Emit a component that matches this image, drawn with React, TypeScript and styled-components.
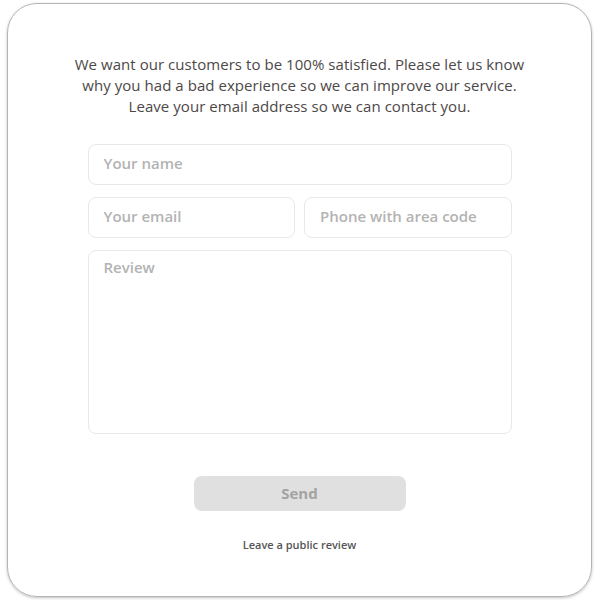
import styled, { createGlobalStyle } from 'styled-components'

const GlobalStyle = createGlobalStyle`
	html, body {
		margin: 0;
		padding: 0;
		background: #ffffff;
	}

	body {
		font-family: 'Open Sans', 'Liberation Sans', sans-serif;
	}
`

export default function App() {
	return (
		<>
			<GlobalStyle />
			<Page>
				<Card>
					<Intro>
						We want our customers to be 100% satisfied. Please let us know
						<br />
						why you had a bad experience so we can improve our service.
						<br />
						Leave your email address so we can contact you.
					</Intro>

					<Form onSubmit={(e) => e.preventDefault()}>
						<Input type='text' placeholder='Your name' />

						<Row>
							<Input type='email' placeholder='Your email' />
							<Input type='tel' placeholder='Phone with area code' />
						</Row>

						<TextArea placeholder='Review' />

						<SendButton type='submit' disabled>Send</SendButton>
					</Form>

					<PublicLink href='#'>Leave a public review</PublicLink>
				</Card>
			</Page>
		</>
	)
}

const Page = styled.div`
	width: 600px;
	height: 600px;
	box-sizing: border-box;
	padding: 3px 8px 3px 7px;
`

const Card = styled.div`
	box-sizing: border-box;
	height: 100%;
	border: 1.5px solid #b4b4b4;
	border-radius: 30px;
	box-shadow: 0 1px 3px rgba(0, 0, 0, 0.25);
	display: flex;
	flex-direction: column;
	align-items: center;
	padding-top: 50px;
`

const Intro = styled.p`
	margin: 0;
	font-size: 15px;
	line-height: 21px;
	color: #4d4848;
	text-align: center;
	letter-spacing: 0.05px;
`

const Form = styled.form`
	width: 424px;
	margin-top: 27px;
	display: flex;
	flex-direction: column;
	gap: 12px;
`

const Row = styled.div`
	display: grid;
	grid-template-columns: 1fr 1fr;
	gap: 9px;
`

const Input = styled.input`
	box-sizing: border-box;
	width: 100%;
	height: 41px;
	padding: 0 15px 3px;
	border: 1px solid #e8e8e8;
	border-radius: 8px;
	font-family: inherit;
	font-size: 15px;
	font-weight: 600;
	color: #444;
	outline: none;

	&::placeholder {
		color: #b3b3b3;
	}
`

const TextArea = styled.textarea`
	box-sizing: border-box;
	width: 100%;
	height: 184px;
	padding: 6px 15px;
	border: 1px solid #e8e8e8;
	border-radius: 8px;
	font-family: inherit;
	font-size: 15px;
	font-weight: 600;
	color: #444;
	resize: none;
	outline: none;

	&::placeholder {
		color: #b3b3b3;
	}
`

const SendButton = styled.button`
	align-self: center;
	width: 212px;
	height: 35px;
	margin-top: 30px;
	padding-bottom: 2px;
	border: none;
	border-radius: 8px;
	background-color: #e0e0e0;
	font-family: inherit;
	font-size: 15px;
	font-weight: 700;
	color: #a3a3a3;
`

const PublicLink = styled.a`
	margin-top: 26px;
	font-size: 11px;
	font-weight: 600;
	color: #555;
	text-decoration: none;
`
